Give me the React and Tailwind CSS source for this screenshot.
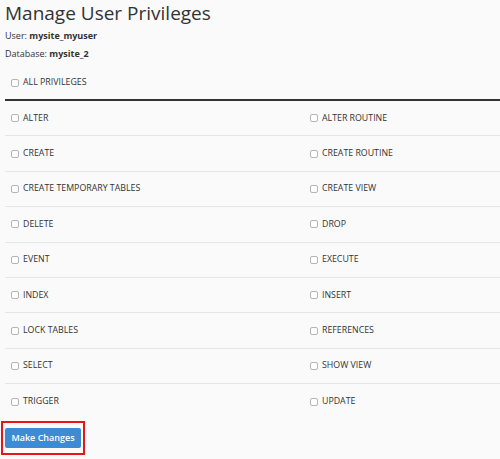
const leftColumn = ["ALTER", "CREATE", "CREATE TEMPORARY TABLES", "DELETE", "EVENT", "INDEX", "LOCK TABLES", "SELECT", "TRIGGER"];
const rightColumn = ["ALTER ROUTINE", "CREATE ROUTINE", "CREATE VIEW", "DROP", "EXECUTE", "INSERT", "REFERENCES", "SHOW VIEW", "UPDATE"];

function Box() {
  return <span className="inline-block h-[8px] w-[8px] shrink-0 rounded-[2px] border border-[#b5b5b5] bg-white" />;
}

function Priv({ label }) {
  return (
    <label className="flex items-center gap-[4px] text-[8.8px] text-[#333]">
      <Box />
      <span>{label}</span>
    </label>
  );
}

export default function App() {
  return (
    <div className="min-h-[459px] w-[500px] bg-[#fafafa] text-[#333]" style={{ fontFamily: '"Open Sans", "Liberation Sans", sans-serif' }}>
      <h1 className="pl-[5px] pt-[1px] text-[19px] leading-[24px] text-[#333]">Manage User Privileges</h1>
      <p className="mt-[2px] pl-[5px] text-[9px] leading-[18px]">
        User: <strong className="font-bold">mysite_myuser</strong>
      </p>
      <p className="pl-[5px] text-[9px] leading-[18px]">
        Database: <strong className="font-bold">mysite_2</strong>
      </p>

      <div className="ml-[5px] mt-[3px]">
        <div className="flex h-[35px] items-center border-b-2 border-[#333] pl-[6px]">
          <Priv label="ALL PRIVILEGES" />
        </div>
        {leftColumn.map((name, i) => (
          <div
            key={name}
            className={`grid h-[35.4px] grid-cols-[299px_1fr] items-center ${i < leftColumn.length - 1 ? "border-b border-[#e6e6e6]" : ""}`}
          >
            <div className="pl-[6px]">
              <Priv label={name} />
            </div>
            <div className="pl-[6px]">
              <Priv label={rightColumn[i]} />
            </div>
          </div>
        ))}
      </div>

      <div className="ml-[1px] mt-[1px] w-fit border-2 border-[#e8141b] px-[2px] py-[5px]">
        <button type="button" className="block h-[20px] w-[76px] whitespace-nowrap rounded-[2px] bg-[#3d8bd4] text-[9px] font-semibold text-white">
          Make Changes
        </button>
      </div>
    </div>
  );
}
